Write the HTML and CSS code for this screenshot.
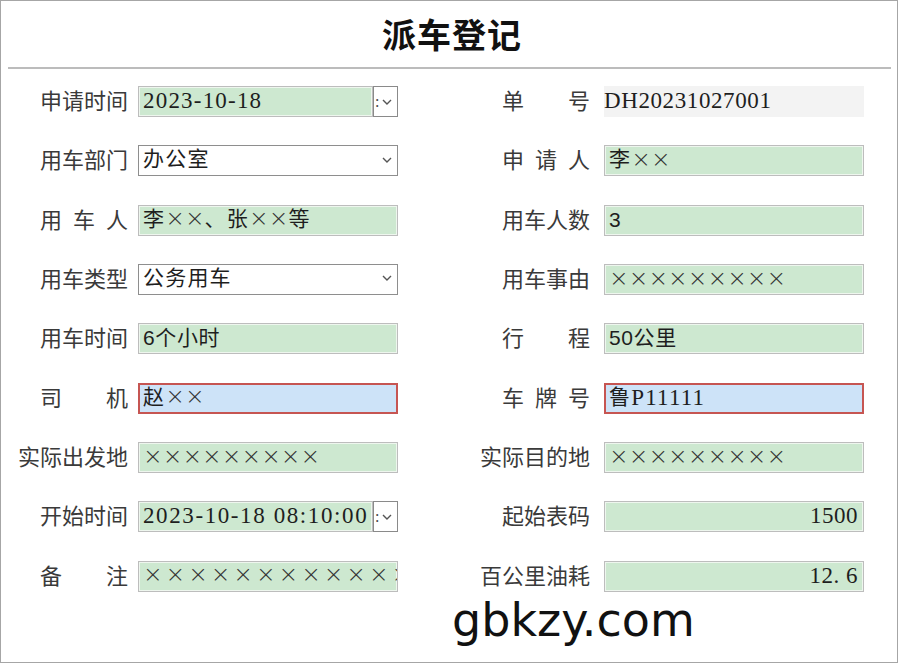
FILE: index.html
```html
<!DOCTYPE html>
<html lang="zh-CN">
<head>
<meta charset="utf-8">
<title>派车登记</title>
<link rel="stylesheet" href="styles.css">
</head>
<body>
<div class="frame">
  <div class="header"><h1 class="title">派车登记</h1></div>
  <div class="rule"></div>
  <div class="form">
    <div class="label"><span class="j">申请时间</span></div>
    <div class="field date"><div class="val green lat">2023-10-18</div><div class="btn"><span class="cut">:</span><svg class="chev" viewBox="0 0 10 6" width="10" height="6"><path d="M1 1 L5 5 L9 1"/></svg></div></div>
    <div class="label r"><span class="j">单 号</span></div>
    <div class="field grey lat id">DH20231027001</div>

    <div class="label"><span class="j">用车部门</span></div>
    <div class="field combo">办公室<svg class="chev" viewBox="0 0 10 6" width="10" height="6"><path d="M1 1 L5 5 L9 1"/></svg></div>
    <div class="label r"><span class="j">申 请 人</span></div>
    <div class="field green">李<span class="x">××</span></div>

    <div class="label"><span class="j">用 车 人</span></div>
    <div class="field green">李<span class="x">××</span>、张<span class="x">××</span>等</div>
    <div class="label r"><span class="j">用车人数</span></div>
    <div class="field green sans">3</div>

    <div class="label"><span class="j">用车类型</span></div>
    <div class="field combo">公务用车<svg class="chev" viewBox="0 0 10 6" width="10" height="6"><path d="M1 1 L5 5 L9 1"/></svg></div>
    <div class="label r"><span class="j">用车事由</span></div>
    <div class="field green"><span class="x">×××××××××</span></div>

    <div class="label"><span class="j">用车时间</span></div>
    <div class="field green sans">6个小时</div>
    <div class="label r"><span class="j">行 程</span></div>
    <div class="field green sans">50公里</div>

    <div class="label"><span class="j">司 机</span></div>
    <div class="field blue">赵<span class="x">××</span></div>
    <div class="label r"><span class="j">车 牌 号</span></div>
    <div class="field blue">鲁<span class="lat">P11111</span></div>

    <div class="label"><span>实际出发地</span></div>
    <div class="field green"><span class="x">×××××××××</span></div>
    <div class="label r"><span>实际目的地</span></div>
    <div class="field green"><span class="x">×××××××××</span></div>

    <div class="label"><span class="j">开始时间</span></div>
    <div class="field date"><div class="val green lat long">2023-10-18 08:10:00</div><div class="btn"><span class="cut">:</span><svg class="chev" viewBox="0 0 10 6" width="10" height="6"><path d="M1 1 L5 5 L9 1"/></svg></div></div>
    <div class="label r"><span class="j">起始表码</span></div>
    <div class="field green num lat">1500</div>

    <div class="label"><span class="j">备 注</span></div>
    <div class="field green"><span class="x wide">×××××××××××××</span></div>
    <div class="label r"><span>百公里油耗</span></div>
    <div class="field green num lat">12. 6</div>
  </div>
  <div class="watermark">gbkzy.com</div>
</div>
</body>
</html>
```

FILE: styles.css
```css
html, body {
  margin: 0;
  padding: 0;
  background: #ffffff;
}

.frame {
  position: relative;
  box-sizing: border-box;
  width: 898px;
  height: 663px;
  border: 1px solid #a6a6a6;
  background: #ffffff;
  font-family: "Noto Sans CJK SC", sans-serif;
  color: #2a2a2a;
}

.header {
  height: 66px;
  display: flex;
  align-items: center;
  justify-content: center;
}

.title {
  margin: 0;
  padding-left: 6px;
  font-size: 34px;
  font-weight: 700;
  letter-spacing: 1px;
  color: #111111;
  line-height: 1;
}

.rule {
  height: 0;
  border-top: 2px solid #bcbcbc;
  margin: 0 6px 0 7px;
}

.form {
  display: grid;
  grid-template-columns: 120px 260px 186px 260px;
  grid-auto-rows: 31px;
  column-gap: 10px;
  row-gap: 28.33px;
  padding: 17px 0 0 7px;
}

.label {
  display: flex;
  align-items: center;
  justify-content: flex-end;
  padding-bottom: 5px;
  font-size: 22px;
  color: #3a3a3a;
  line-height: 1;
  white-space: nowrap;
}

.label.r {
  padding-right: 4px;
}

.label .j {
  display: inline-block;
  width: 88px;
  text-align: justify;
  text-align-last: justify;
}

.field {
  box-sizing: border-box;
  display: flex;
  align-items: center;
  padding: 0 4px 2px;
  font-family: "Liberation Serif", "Noto Sans CJK SC", serif;
  font-size: 21px;
  letter-spacing: 1.2px;
  line-height: 1;
  color: #1e1e1e;
  white-space: nowrap;
  overflow: hidden;
}

.lat {
  font-family: "Liberation Serif", "Noto Sans CJK SC", serif;
  font-size: 23px;
  letter-spacing: 1.2px;
}

.lat.long {
  letter-spacing: 1.6px;
}

.id {
  letter-spacing: 0.6px;
}

.green {
  background: #cde8d0;
  border: 1px solid #bdbdbd;
  box-shadow: inset 0 0 0 1px #eef6ee;
}

.blue {
  background: #cde3f8;
  border: 2px solid #c65552;
  padding-left: 3px;
}

.grey {
  background: #f3f3f3;
  padding-left: 0;
}

.combo {
  background: #ffffff;
  border: 1px solid #8e8e8e;
  justify-content: space-between;
  padding-right: 5px;
}

.sans {
  font-family: "Liberation Sans", "Noto Sans CJK SC", sans-serif;
  letter-spacing: 0.6px;
}

.num {
  justify-content: flex-end;
  padding-right: 5px;
  letter-spacing: 0.5px;
}

.x {
  font-family: "DejaVu Sans", sans-serif;
  font-size: 23.5px;
  line-height: 1;
  letter-spacing: 0;
  font-weight: 200;
  color: #333333;
}

.x.wide {
  letter-spacing: 2.9px;
}

.date {
  padding: 0;
  overflow: visible;
}

.date .val {
  box-sizing: border-box;
  flex: 1;
  height: 100%;
  display: flex;
  align-items: center;
  padding: 0 4px 2px;
  overflow: hidden;
}

.date .btn {
  box-sizing: border-box;
  width: 25px;
  height: 100%;
  border: 1px solid #8a8a8a;
  background: #ffffff;
  display: flex;
  align-items: center;
  padding-left: 1px;
  gap: 3px;
}

.date .btn .cut {
  font-size: 16px;
  color: #444;
  letter-spacing: 0;
  width: 4px;
  overflow: hidden;
}

.chev {
  display: block;
  flex: none;
}

.chev path {
  fill: none;
  stroke: #555555;
  stroke-width: 1.4;
}

.watermark {
  position: absolute;
  left: 451px;
  top: 596px;
  font-family: "DejaVu Sans", sans-serif;
  font-size: 46px;
  line-height: 1;
  color: #111111;
}
```
